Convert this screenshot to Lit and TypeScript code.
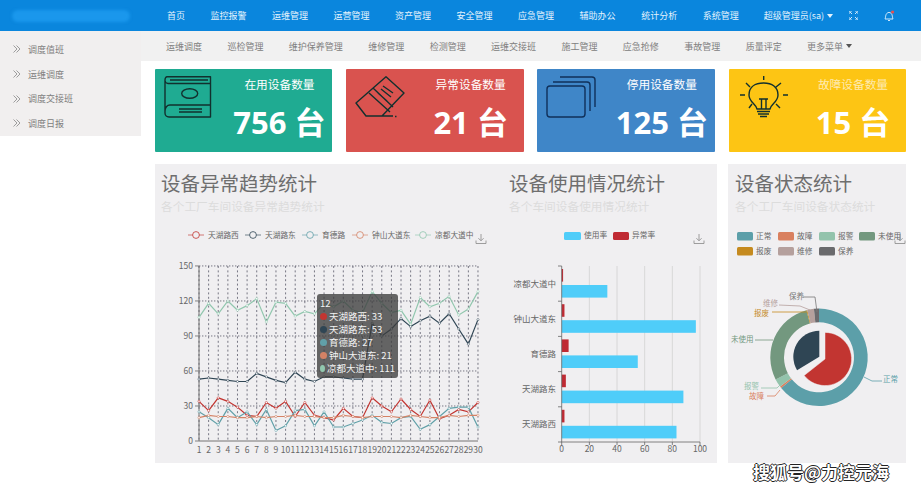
import { LitElement, html, svg, css } from 'lit'
import { customElement } from 'lit/decorators.js'

const NAV = ['首页', '监控报警', '运维管理', '运营管理', '资产管理', '安全管理', '应急管理', '辅助办公', '统计分析', '系统管理']
const SUBNAV = ['运维调度', '巡检管理', '维护保养管理', '维修管理', '检测管理', '运维交接班', '施工管理', '应急抢修', '事故管理', '质量评定']
const SIDE = ['调度值班', '运维调度', '调度交接班', '调度日报']

const SERIES = [
  { name: '天湖路西', color: '#c23531', lx: 188, data: [34, 26, 37, 34, 29, 22, 21, 33, 28, 34, 21, 33, 22, 20, 18, 28, 21, 20, 37, 30, 25, 36, 27, 21, 35, 19, 22, 27, 25, 33] },
  { name: '天湖路东', color: '#2f4554', lx: 245, data: [53, 54, 53, 52, 51, 51, 58, 55, 52, 50, 59, 53, 51, 55, 55, 54, 53, 53, 101, 90, 96, 105, 98, 103, 107, 101, 109, 96, 83, 104] },
  { name: '育德路', color: '#61a0a8', lx: 302, data: [25, 20, 14, 28, 20, 25, 14, 27, 9, 13, 26, 27, 13, 25, 12, 12, 15, 18, 22, 16, 15, 20, 21, 10, 14, 21, 28, 29, 29, 12] },
  { name: '钟山大道东', color: '#d48265', lx: 352, data: [20, 22, 21, 21, 20, 20, 21, 20, 21, 21, 22, 21, 21, 20, 20, 22, 21, 20, 21, 21, 21, 20, 22, 21, 20, 20, 22, 21, 22, 22] },
  { name: '凉都大道中', color: '#91c7ae', lx: 415, data: [106, 118, 109, 120, 112, 116, 122, 102, 119, 118, 107, 111, 109, 118, 115, 120, 112, 110, 128, 118, 110, 112, 100, 123, 115, 118, 124, 108, 113, 128] }
]

const TIP = [
  ['#c23531', '天湖路西: 33'],
  ['#2f4554', '天湖路东: 53'],
  ['#61a0a8', '育德路: 27'],
  ['#d48265', '钟山大道东: 21'],
  ['#91c7ae', '凉都大道中: 111']
]

const BARS = [
  ['凉都大道中', 33, 1],
  ['钟山大道东', 97, 2],
  ['育德路', 55, 5],
  ['天湖路东', 88, 3],
  ['天湖路西', 83, 2]
] as const

const STATES = [
  { name: '正常', color: '#5c9fa9', x: 737, y: 232 },
  { name: '故障', color: '#d9805f', x: 778, y: 232 },
  { name: '报警', color: '#93c3ac', x: 819, y: 232 },
  { name: '未使用', color: '#73987f', x: 859, y: 232 },
  { name: '报废', color: '#c58a1f', x: 737, y: 247 },
  { name: '维修', color: '#b5a09d', x: 778, y: 247 },
  { name: '保养', color: '#6a6a6d', x: 819, y: 247 }
]

const RING = [
  ['#5c9fa9', 0, 231],
  ['#d9805f', 231, 233],
  ['#93c3ac', 233, 243],
  ['#73987f', 243, 345],
  ['#c58a1f', 345, 346],
  ['#b5a09d', 346, 354],
  ['#6a6a6d', 354, 360]
] as const

const LABELS = [
  { text: '保养', color: '#777', x: 789, y: 299, line: '803,297 815,297 817,312' },
  { text: '维修', color: '#b5a09d', x: 763, y: 306, line: '779,305 800,306 810,310' },
  { text: '报废', color: '#c58a1f', x: 754, y: 316, line: '772,312 807,312' },
  { text: '未使用', color: '#73987f', x: 731, y: 342, line: '755,340 773,340' },
  { text: '报警', color: '#93c3ac', x: 744, y: 389, line: '761,388 777,388 784,381' },
  { text: '故障', color: '#d9805f', x: 749, y: 399, line: '767,396 775,396 780,390' },
  { text: '正常', color: '#5c9fa9', x: 883, y: 382, line: '864,377 872,381 882,381' }
]

// line chart scale, in page coordinates
const lx = (i: number) => 199 + i * 9.62
const ly = (v: number) => 441 - v * 1.167

const polar = (cx: number, cy: number, r: number, deg: number) => {
  const a = (deg * Math.PI) / 180
  return [cx + r * Math.sin(a), cy - r * Math.cos(a)]
}

const ringPath = (cx: number, cy: number, r1: number, r2: number, from: number, to: number) => {
  const [a, b] = polar(cx, cy, r2, from)
  const [c, d] = polar(cx, cy, r2, to)
  const [e, f] = polar(cx, cy, r1, to)
  const [g, h] = polar(cx, cy, r1, from)
  const large = to - from > 180 ? 1 : 0
  return `M${a} ${b}A${r2} ${r2} 0 ${large} 1 ${c} ${d}L${e} ${f}A${r1} ${r1} 0 ${large} 0 ${g} ${h}Z`
}

const wedge = (cx: number, cy: number, r: number, from: number, to: number) => {
  const [a, b] = polar(cx, cy, r, from)
  const [c, d] = polar(cx, cy, r, to)
  const large = to - from > 180 ? 1 : 0
  return `M${cx} ${cy}L${a} ${b}A${r} ${r} 0 ${large} 1 ${c} ${d}Z`
}

const saveIcon = (x: number, y: number) => svg`
  <g transform="translate(${x} ${y})" class="save">
    <path d="M5 0V6.5M2.4 4.2L5 6.8 7.6 4.2M0 6.5V9.5H10V6.5"></path>
  </g>`

const bookIcon = html`<svg class="icon" viewBox="0 0 50 42">
  <path d="M3 0.8H46.5V41H5C2.5 41 1 39 1 37V4C1 2 2 0.8 3 0.8ZM1 4.5C1 6 2.5 7.5 4 7.5H46.5M6 4H44M46.5 29H6C3 29 1 31.5 1 35M15 33H38M15 36H38"></path>
  <ellipse cx="25.7" cy="17.5" rx="8" ry="4.8"></ellipse>
</svg>`

const eraserIcon = html`<svg class="icon" viewBox="0 0 50 42">
  <path d="M31 0.8L49 17 27 40H11L1 27ZM14 17L35 36M18 12L38 31M23 17L32 25M26 13L36 21M28 10L38 17M11 40H38M40 40.5H41.5"></path>
</svg>`

const stackIcon = html`<svg class="icon navy" viewBox="0 0 50 42">
  <rect x="1" y="10" width="38" height="31" rx="3"></rect>
  <path d="M7 6H41C43 6 44 7 44 9V35M14 1H46C48 1 49 2 49 4V31"></path>
</svg>`

const bulbIcon = html`<svg class="icon" viewBox="0 0 50 42">
  <path d="M19 33C18 28 11 26 11 19 11 11 17 7 25.7 7 34 7 40 11 40 19 40 26 33 28 32 33ZM19 35.5H32M20 38H31M22 40.5H29M21 23H30M23.5 23V33M28 23V33M25.7 0V4M8 7L12 11M43 7L38 11M2 19H7M45 19H50M11 32L14 28M42 32L38 28"></path>
</svg>`

const CARDS = [
  { cls: 'green', title: '在用设备数量', value: '756 台', icon: bookIcon },
  { cls: 'red', title: '异常设备数量', value: '21 台', icon: eraserIcon },
  { cls: 'blue', title: '停用设备数量', value: '125 台', icon: stackIcon },
  { cls: 'yellow', title: '故障设备数量', value: '15 台', icon: bulbIcon }
]

@customElement('app-root')
export class AppRoot extends LitElement {
  static styles = css`
    :host {
      display: block;
      position: relative;
      width: 921px;
      height: 489px;
      overflow: hidden;
      background: #fff;
      font-family: "Noto Sans CJK SC", "Noto Sans", sans-serif;
    }

    /* top bar */
    .top {
      height: 31px;
      display: flex;
      align-items: center;
      background: #0a86dd;
      color: #e4f2fc;
      font-size: 9px;
      white-space: nowrap;
    }
    .logo {
      width: 118px;
      height: 12px;
      margin-left: 12px;
      margin-right: 37px;
      border-radius: 6px;
      background: #1a97ec;
      filter: blur(1.5px);
    }
    .nav {
      display: flex;
      gap: 25.5px;
    }
    .user {
      margin-left: 25px;
      display: flex;
      align-items: center;
      gap: 3px;
    }
    .caret {
      display: inline-block;
      border: 3.5px solid transparent;
      border-top: 4px solid currentColor;
      border-bottom: 0;
    }
    .top svg {
      display: block;
      fill: none;
      stroke: #cfe8fa;
      stroke-width: 1;
    }
    .expand { margin-left: 16px; }
    .bell { margin-left: 25px; }

    /* body */
    .body {
      display: grid;
      grid-template-columns: 141px 1fr;
    }
    .side {
      height: 105px;
      padding-top: 6px;
      box-sizing: border-box;
      background: #f1efef;
      font-size: 9px;
      color: #808080;
    }
    .side div {
      height: 24.7px;
      display: flex;
      align-items: center;
      gap: 7px;
      padding-left: 13px;
    }
    .side svg {
      width: 8px;
      height: 8px;
      fill: none;
      stroke: #888;
      stroke-width: 0.8;
    }
    .sub {
      height: 30px;
      display: flex;
      align-items: center;
      gap: 25.4px;
      padding-left: 25px;
      background: #f1f1f1;
      font-size: 9px;
      color: #808080;
      white-space: nowrap;
    }
    .sub .more {
      display: flex;
      align-items: center;
      gap: 3px;
    }
    .sub .caret { color: #555; }

    /* stat cards */
    .content {
      padding: 8px 15px 0 14px;
    }
    .cards {
      display: grid;
      grid-template-columns: repeat(4, 1fr);
      gap: 13.7px;
    }
    .card {
      height: 83px;
      display: flex;
      justify-content: space-between;
      padding: 7px 0 0 9px;
      box-sizing: border-box;
      border-radius: 1px;
      color: #fff;
    }
    .green { background: #1fab92; }
    .red { background: #d9534f; }
    .blue { background: #3f86c8; }
    .yellow { background: #fdc514; }
    .yellow .stat-title { color: #feeab0; }
    .icon {
      width: 50px;
      height: 42px;
      fill: none;
      stroke: #12302e;
      stroke-width: 1.4;
      stroke-linejoin: round;
    }
    .icon.navy { stroke: #10305a; }
    .stat {
      width: 106px;
      display: flex;
      flex-direction: column;
      align-items: center;
    }
    .stat-title {
      font-size: 11.7px;
      line-height: 16px;
      white-space: nowrap;
    }
    .stat-value {
      margin-top: 8px;
      font-family: "Open Sans", "Noto Sans CJK SC", sans-serif;
      font-size: 31px;
      line-height: 44px;
      font-weight: 700;
      white-space: nowrap;
    }

    /* chart panels */
    .panels {
      display: grid;
      grid-template-columns: 340px 222px 189px;
      margin-top: 12px;
    }
    .panel {
      position: relative;
      height: 299px;
      background: #f0eff1;
    }
    .panel.last { margin-left: 11px; }
    .head {
      height: 54px;
      padding-left: 6px;
      box-sizing: border-box;
    }
    .panel.mid .head { padding-left: 14px; }
    .panel.last .head { padding-left: 7px; }
    .head h2 {
      margin: 0;
      padding-top: 6px;
      font-size: 19.5px;
      line-height: 26px;
      font-weight: 400;
      color: #6e6e6e;
      white-space: nowrap;
    }
    .head p {
      margin: 2px 0 0;
      font-size: 11.7px;
      line-height: 16px;
      color: #dcdcdc;
      white-space: nowrap;
    }
    .chart {
      display: block;
      width: 100%;
      height: 245px;
    }
    .chart text {
      font-size: 7.7px;
      fill: #666;
    }
    .chart .tick {
      font-size: 8.5px;
      fill: #666;
    }
    .chart .hint {
      font-size: 7.5px;
    }
    .save path {
      fill: none;
      stroke: #888;
      stroke-width: 0.8;
    }
    .tip {
      position: absolute;
      left: 162px;
      top: 130px;
      width: 81px;
      height: 84px;
      padding: 3px 3px;
      box-sizing: border-box;
      border-radius: 3px;
      background: rgba(60, 60, 60, 0.78);
      color: #f2f2f2;
      font-size: 9.5px;
      line-height: 13px;
      white-space: nowrap;
    }
    .tip div {
      display: flex;
      align-items: center;
      gap: 2px;
    }
    .tip i {
      width: 7px;
      height: 7px;
      border-radius: 50%;
    }

    .mark {
      position: absolute;
      left: 753px;
      top: 459px;
      color: #fff;
      font-size: 17px;
      line-height: 26px;
      font-weight: 700;
      white-space: nowrap;
      text-shadow: -1px 0 #222, 1px 0 #222, 0 -1px #222, 0 1px #222;
    }
  `

  renderLine () {
    const cols = Array.from({ length: 30 }, (_, i) => i)
    return html`<svg class="chart" viewBox="155 218 340 245">
      ${SERIES.map(s => svg`
        <path d="M${s.lx} 235H${s.lx + 16}" stroke=${s.color} stroke-width="0.8" opacity="0.8"></path>
        <circle cx=${s.lx + 8} cy="235" r="3.4" fill="#f0eff1" stroke=${s.color} stroke-width="0.8"></circle>
        <text x=${s.lx + 20} y="238">${s.name}</text>`)}
      ${saveIcon(476, 234)}
      ${cols.map(i => svg`<path d=${`M${lx(i)} 266V441`} stroke="#445" stroke-width="0.7" stroke-dasharray="2 2.4"></path>`)}
      ${[30, 60, 90, 120, 150].map(v => svg`<path d=${`M199 ${ly(v)}H478`} stroke="#445" stroke-width="0.7" stroke-dasharray="1.4 1.6"></path>`)}
      <path d="M199 266V441H478" fill="none" stroke="#666" stroke-width="0.9"></path>
      ${[0, 30, 60, 90, 120, 150].map(v => svg`
        <path d=${`M195 ${ly(v)}H199`} stroke="#666" stroke-width="0.8"></path>
        <text class="tick" x="193" y=${ly(v) + 3} text-anchor="end">${v}</text>`)}
      ${cols.map(i => svg`<text class="tick" x=${lx(i)} y="453" text-anchor="middle">${i + 1}</text>`)}
      ${SERIES.map(s => svg`
        <polyline points=${s.data.map((v, i) => `${lx(i)},${ly(v)}`).join(' ')} fill="none" stroke=${s.color} stroke-width="1.2"></polyline>
        ${s.data.map((v, i) => svg`<circle cx=${lx(i)} cy=${ly(v)} r="1.1" fill="#fff" stroke=${s.color} stroke-width="0.5"></circle>`)}`)}
    </svg>`
  }

  renderBars () {
    const x0 = 561.7
    const k = 1.383
    return html`<svg class="chart" viewBox="495 218 222 245">
      <rect x="564" y="232" width="17" height="8" rx="1.5" fill="#4fcdf9"></rect>
      <text x="584" y="238">使用率</text>
      <rect x="613" y="232" width="16" height="8" rx="1.5" fill="#bf2a33"></rect>
      <text x="632" y="238">异常率</text>
      ${saveIcon(694, 234)}
      ${[20, 40, 60, 80, 100].map(v => svg`<path d=${`M${x0 + v * k} 266V442`} stroke="#d2d2d2" stroke-width="0.8"></path>`)}
      ${BARS.map((b, i) => {
        const top = 266 + i * 35.2
        return svg`
          <path d=${`M558 ${top}H${x0}`} stroke="#666" stroke-width="0.8"></path>
          <rect x=${x0} y=${top + 3} width=${b[2] * k} height="12.6" fill="#bf2a33"></rect>
          <rect x=${x0} y=${top + 19} width=${b[1] * k} height="12.6" fill="#4fcdf9"></rect>
          <text class="tick" x="556" y=${top + 20.5} text-anchor="end">${b[0]}</text>`
      })}
      <path d=${`M${x0} 266V442H700`} fill="none" stroke="#666" stroke-width="0.8"></path>
      <path d="M558 442H562"  stroke="#666" stroke-width="0.8"></path>
      ${[0, 20, 40, 60, 80, 100].map(v => svg`
        <path d=${`M${x0 + v * k} 442V445`} stroke="#666" stroke-width="0.8"></path>
        <text class="tick" x=${x0 + v * k} y="452" text-anchor="middle">${v}</text>`)}
    </svg>`
  }

  renderDonut () {
    return html`<svg class="chart" viewBox="728 218 178 245">
      ${STATES.map(s => svg`
        <rect x=${s.x} y=${s.y} width="16" height="8.5" rx="1.5" fill=${s.color}></rect>
        <text x=${s.x + 19} y=${s.y + 7}>${s.name}</text>`)}
      ${saveIcon(895, 234)}
      ${RING.map(r => svg`<path d=${ringPath(819, 357.3, 35, 48.7, r[1], r[2])} fill=${r[0]}></path>`)}
      <path d=${wedge(825, 359, 26.6, 0, 231.7)} fill="#c23531" stroke="#f0eff1" stroke-width="0.5"></path>
      <path d=${wedge(819.3, 356.7, 26, 238.8, 360)} fill="#2f4554"></path>
      ${LABELS.map(l => svg`
        <polyline points=${l.line} fill="none" stroke=${l.color} stroke-width="0.8"></polyline>
        <text class="hint" style=${`fill:${l.color}`} x=${l.x} y=${l.y}>${l.text}</text>`)}
    </svg>`
  }

  render () {
    return html`
      <div class="top">
        <div class="logo"></div>
        <div class="nav">${NAV.map(n => html`<span>${n}</span>`)}</div>
        <div class="user">超级管理员(sa)<span class="caret"></span></div>
        <svg class="expand" width="9" height="9" viewBox="0 0 9 9"><path d="M0 3V0H3M6 0H9V3M9 6V9H6M3 9H0V6M1 1L3 3M8 1L6 3M8 8L6 6M1 8L3 6"></path></svg>
        <svg class="bell" width="12" height="12" viewBox="0 0 12 12"><path d="M2 9C3 7 2 3 6 2.4 10 3 9 7 10 9ZM5 10.5H7"></path><circle cx="9.6" cy="2" r="1.6" fill="#e8504f" stroke="none"></circle></svg>
      </div>
      <div class="body">
        <div class="side">
          ${SIDE.map(s => html`<div><svg viewBox="0 0 8 8"><path d="M0.5 0.5L4 4 0.5 7.5M3.5 0.5L7 4 3.5 7.5"></path></svg>${s}</div>`)}
        </div>
        <div>
          <div class="sub">
            ${SUBNAV.map(s => html`<span>${s}</span>`)}
            <span class="more">更多菜单<span class="caret"></span></span>
          </div>
          <div class="content">
            <div class="cards">
              ${CARDS.map(c => html`
                <div class="card ${c.cls}">
                  ${c.icon}
                  <div class="stat">
                    <div class="stat-title">${c.title}</div>
                    <div class="stat-value">${c.value}</div>
                  </div>
                </div>`)}
            </div>
            <div class="panels">
              <div class="panel">
                <div class="head"><h2>设备异常趋势统计</h2><p>各个工厂车间设备异常趋势统计</p></div>
                ${this.renderLine()}
                <div class="tip">
                  12
                  ${TIP.map(t => html`<div><i style="background:${t[0]}"></i>${t[1]}</div>`)}
                </div>
              </div>
              <div class="panel mid">
                <div class="head"><h2>设备使用情况统计</h2><p>各个车间设备使用情况统计</p></div>
                ${this.renderBars()}
              </div>
              <div class="panel last">
                <div class="head"><h2>设备状态统计</h2><p>各个工厂车间设备状态统计</p></div>
                ${this.renderDonut()}
              </div>
            </div>
          </div>
        </div>
      </div>
      <div class="mark">搜狐号@力控元海</div>
    `
  }
}
